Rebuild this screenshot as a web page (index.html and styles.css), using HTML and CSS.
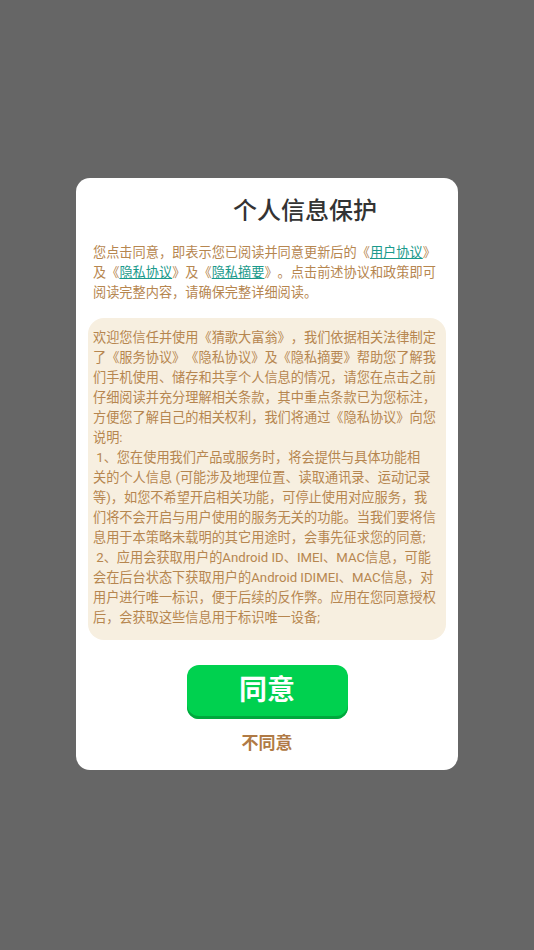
FILE: index.html
```html
<!DOCTYPE html>
<html lang="zh-CN">
<head>
<meta charset="utf-8">
<title>个人信息保护</title>
<link rel="stylesheet" href="styles.css">
</head>
<body>
<div class="overlay">
  <div class="card">
    <h1 class="title">个人信息保护</h1>
    <p class="intro">您点击同意，即表示您已阅读并同意更新后的《<a class="link">用户协议</a>》及《<a class="link">隐私协议</a>》及《<a class="link">隐私摘要</a>》。点击前述协议和政策即可阅读完整内容，请确保完整详细阅读。</p>
    <div class="content">欢迎您信任并使用《猜歌大富翁》，我们依据相关法律制定了《服务协议》《隐私协议》及《隐私摘要》帮助您了解我们手机使用、储存和共享个人信息的情况，请您在点击之前仔细阅读并充分理解相关条款，其中重点条款已为您标注，方便您了解自己的相关权利，我们将通过《隐私协议》向您说明:<br>&nbsp;1、您在使用我们产品或服务时，将会提供与具体功能相<span class="nowrap">关的</span>个人信息 (可能涉及地理位置、读取通讯录、运动记录等)，如您不希望开启相关功能，可停止使用对应服务，我们将不会开启与用户使用的服务无关的功能。当我们要将信息用于本策略未载明的其它用途时，会事先征求您的同意;<br>&nbsp;2、应用会获取用户的Android ID、IMEI、MAC信息，可能会在后台状态下获取用户的Android IDIMEI、MAC信息，对用户进行唯一标识，便于后续的反作弊。应用在您同意授权后，会获取这些信息用于标识唯一设备;</div>
    <div class="actions">
      <button class="agree">同意</button>
      <button class="disagree">不同意</button>
    </div>
  </div>
</div>
</body>
</html>
```

FILE: styles.css
```css
html, body {
  margin: 0;
  padding: 0;
}
body {
  background: #666666;
  font-family: Roboto, "Noto Sans CJK SC", sans-serif;
  text-spacing-trim: space-all;
}
.overlay {
  height: 950px;
  display: flex;
  align-items: flex-start;
  justify-content: center;
  padding-top: 178px;
  box-sizing: border-box;
}
.card {
  width: 382px;
  background: #ffffff;
  border-radius: 14px;
  padding: 17px 12px 15px 12px;
  box-sizing: border-box;
  display: flex;
  flex-direction: column;
}
.title {
  margin: 0;
  padding-left: 76px;
  font-size: 24px;
  line-height: 32px;
  font-weight: 500;
  color: #333333;
  text-align: center;
}
.intro {
  margin: 16px 0 0 0;
  padding: 0 5px;
  font-size: 13.2px;
  line-height: 20px;
  color: #b6864f;
}
.link {
  color: #1a9a8c;
  text-decoration: underline;
}
.content {
  margin-top: 15px;
  background: #f7efe0;
  border-radius: 16px;
  padding: 10px 8px 12px 5px;
  font-size: 13.2px;
  line-height: 20px;
  color: #b6864f;
}
.nowrap {
  white-space: nowrap;
}
.actions {
  margin-top: 25px;
  display: flex;
  flex-direction: column;
  align-items: center;
}
.agree {
  width: 161px;
  height: 54px;
  border: none;
  border-radius: 12px;
  background: #00d14f;
  box-shadow: inset 0 -3px 0 #00a83d;
  color: #ffffff;
  font-family: inherit;
  font-size: 28px;
  font-weight: 700;
  line-height: 1;
  padding: 0 0 3px 0;
}
.disagree {
  margin-top: 12px;
  border: none;
  background: none;
  padding: 0;
  font-family: inherit;
  font-size: 17px;
  line-height: 24px;
  font-weight: 700;
  color: #b07a45;
}
```
